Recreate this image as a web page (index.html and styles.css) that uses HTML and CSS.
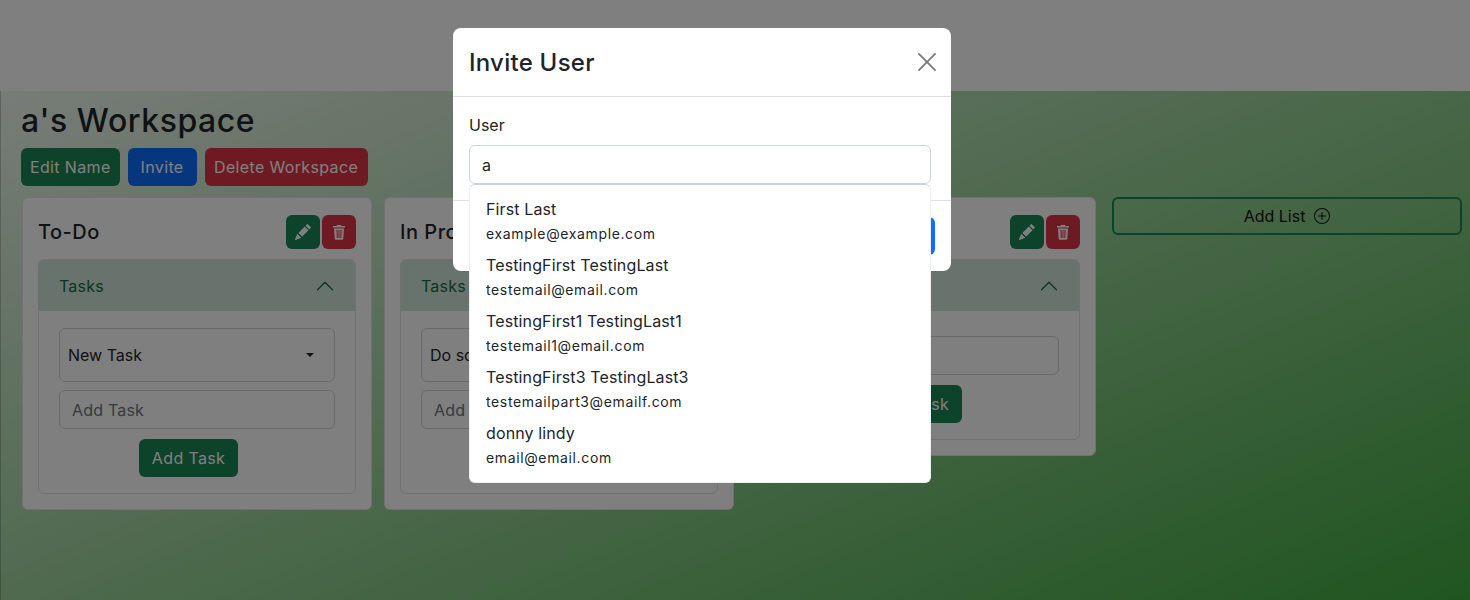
FILE: index.html
```html
<!DOCTYPE html>
<html lang="en">
<head>
    <meta charset="UTF-8">
    <meta name="viewport" content="width=device-width, initial-scale=1.0">
    <title>Workspace</title>
    <link rel="stylesheet" href="styles.css">
</head>
<body>
    <nav class="navbar"></nav>
    <main class="workspace">
        <h1 class="workspace-title">a's Workspace</h1>
        <div class="workspace-actions">
            <button class="btn btn-green">Edit Name</button>
            <button class="btn btn-blue invite-btn">Invite</button>
            <button class="btn btn-red delete-btn">Delete Workspace</button>
        </div>
        <div class="board">
            <section class="list">
                <div class="list-head">
                    <h2 class="list-title">To-Do</h2>
                    <div class="list-tools">
                        <button class="tool btn-green"><svg width="16" height="16" viewBox="0 0 16 16" fill="currentColor"><path d="M12.854.146a.5.5 0 0 0-.707 0L10.5 1.793 14.207 5.5l1.647-1.646a.5.5 0 0 0 0-.708l-3-3zm.646 6.061L9.793 2.5 3.293 9H3.5a.5.5 0 0 1 .5.5v.5h.5a.5.5 0 0 1 .5.5v.5h.5a.5.5 0 0 1 .5.5v.5h.5a.5.5 0 0 1 .5.5v.207l6.5-6.5zm-7.468 7.468A.5.5 0 0 1 6 13.5V13h-.5a.5.5 0 0 1-.5-.5V12h-.5a.5.5 0 0 1-.5-.5V11h-.5a.5.5 0 0 1-.5-.5V10h-.5a.499.499 0 0 1-.175-.032l-.179.178a.5.5 0 0 0-.11.168l-2 5a.5.5 0 0 0 .65.65l5-2a.5.5 0 0 0 .168-.11l.178-.178z"/></svg></button>
                        <button class="tool btn-red"><svg width="16" height="16" viewBox="0 0 16 16" fill="currentColor"><path d="M6 1h4l.6 1H14v1.6H2V2h3.400z"/><path fill-rule="evenodd" d="M3 4.400h10l-.7 10.400a1 1 0 0 1-1 .9H4.700a1 1 0 0 1-1-.9zM5.500 6l.3 8h1l-.2-8zm2 0v8h1V6zm2 0-.2 8h1l.3-8z"/></svg></button>
                    </div>
                </div>
                <div class="tasks">
                    <div class="tasks-head">
                        <span>Tasks</span>
                        <svg class="chevron" width="20" height="20" viewBox="0 0 16 16" fill="currentColor"><path fill-rule="evenodd" d="M1.646 11.354a.5.5 0 0 0 .708 0L8 5.707l5.646 5.647a.5.5 0 0 0 .708-.708l-6-6a.5.5 0 0 0-.708 0l-6 6a.5.5 0 0 0 0 .708z"/></svg>
                    </div>
                    <div class="tasks-body">
                        <div class="task-select"><span>New Task</span><i class="caret"></i></div>
                        <input class="task-input" type="text" placeholder="Add Task">
                        <button class="btn btn-green add-task">Add Task</button>
                    </div>
                </div>
            </section>
            <section class="list">
                <div class="list-head">
                    <h2 class="list-title">In Progress</h2>
                    <div class="list-tools">
                        <button class="tool btn-green"></button>
                        <button class="tool btn-red"></button>
                    </div>
                </div>
                <div class="tasks">
                    <div class="tasks-head">
                        <span>Tasks</span>
                    </div>
                    <div class="tasks-body">
                        <div class="task-select"><span>Do something</span><i class="caret"></i></div>
                        <input class="task-input" type="text" placeholder="Add Task">
                        <button class="btn btn-green add-task">Add Task</button>
                    </div>
                </div>
            </section>
            <section class="list">
                <div class="list-head">
                    <h2 class="list-title">Done</h2>
                    <div class="list-tools">
                        <button class="tool btn-green"><svg width="16" height="16" viewBox="0 0 16 16" fill="currentColor"><path d="M12.854.146a.5.5 0 0 0-.707 0L10.5 1.793 14.207 5.5l1.647-1.646a.5.5 0 0 0 0-.708l-3-3zm.646 6.061L9.793 2.5 3.293 9H3.5a.5.5 0 0 1 .5.5v.5h.5a.5.5 0 0 1 .5.5v.5h.5a.5.5 0 0 1 .5.5v.5h.5a.5.5 0 0 1 .5.5v.207l6.5-6.5zm-7.468 7.468A.5.5 0 0 1 6 13.5V13h-.5a.5.5 0 0 1-.5-.5V12h-.5a.5.5 0 0 1-.5-.5V11h-.5a.5.5 0 0 1-.5-.5V10h-.5a.499.499 0 0 1-.175-.032l-.179.178a.5.5 0 0 0-.11.168l-2 5a.5.5 0 0 0 .65.65l5-2a.5.5 0 0 0 .168-.11l.178-.178z"/></svg></button>
                        <button class="tool btn-red"><svg width="16" height="16" viewBox="0 0 16 16" fill="currentColor"><path d="M6 1h4l.6 1H14v1.6H2V2h3.400z"/><path fill-rule="evenodd" d="M3 4.400h10l-.7 10.400a1 1 0 0 1-1 .9H4.700a1 1 0 0 1-1-.9zM5.500 6l.3 8h1l-.2-8zm2 0v8h1V6zm2 0-.2 8h1l.3-8z"/></svg></button>
                    </div>
                </div>
                <div class="tasks">
                    <div class="tasks-head">
                        <span>Tasks</span>
                        <svg class="chevron" width="20" height="20" viewBox="0 0 16 16" fill="currentColor"><path fill-rule="evenodd" d="M1.646 11.354a.5.5 0 0 0 .708 0L8 5.707l5.646 5.647a.5.5 0 0 0 .708-.708l-6-6a.5.5 0 0 0-.708 0l-6 6a.5.5 0 0 0 0 .708z"/></svg>
                    </div>
                    <div class="tasks-body tasks-body-empty">
                        <input class="task-input" type="text" placeholder="Add Task">
                        <button class="btn btn-green add-task">Add Task</button>
                    </div>
                </div>
            </section>
            <button class="add-list">Add List <svg width="16" height="16" viewBox="0 0 16 16" fill="currentColor"><path d="M8 15A7 7 0 1 1 8 1a7 7 0 0 1 0 14zm0 1A8 8 0 1 0 8 0a8 8 0 0 0 0 16z"/><path d="M8 4a.5.5 0 0 1 .5.5v3h3a.5.5 0 0 1 0 1h-3v3a.5.5 0 0 1-1 0v-3h-3a.5.5 0 0 1 0-1h3v-3A.5.5 0 0 1 8 4z"/></svg></button>
        </div>
    </main>

    <div class="backdrop"></div>
    <div class="modal">
        <div class="modal-head">
            <h3 class="modal-title">Invite User</h3>
            <svg class="modal-close" width="18" height="18" viewBox="0 0 16 16" fill="currentColor"><path d="M.293.293a.8.8 0 0 1 1.130 0L8 6.870 14.577.293a.8.8 0 1 1 1.130 1.130L9.130 8l6.577 6.577a.8.8 0 0 1-1.130 1.130L8 9.130l-6.577 6.577a.8.8 0 0 1-1.130-1.130L6.870 8 .293 1.423a.8.8 0 0 1 0-1.130z"/></svg>
        </div>
        <div class="modal-body">
            <label class="field-label" for="user">User</label>
            <input class="field-input" id="user" type="text" value="a">
            <ul class="suggestions">
                <li><span class="person">First Last</span><span class="email">example@example.com</span></li>
                <li><span class="person">TestingFirst TestingLast</span><span class="email">testemail@email.com</span></li>
                <li><span class="person">TestingFirst1 TestingLast1</span><span class="email">testemail1@email.com</span></li>
                <li><span class="person">TestingFirst3 TestingLast3</span><span class="email">testemailpart3@emailf.com</span></li>
                <li><span class="person">donny lindy</span><span class="email">email@email.com</span></li>
            </ul>
        </div>
        <div class="modal-foot">
            <button class="btn btn-blue">Invite</button>
        </div>
    </div>
</body>
</html>
```

FILE: styles.css
```css
* {
    box-sizing: border-box;
}
html, body {
    height: 100%;
}
body {
    margin: 0;
    font-family: Inter, "Noto Sans", sans-serif;
    font-size: 16px;
    color: #212529;
    overflow: hidden;
    background: linear-gradient(to bottom right, #fff, #40aa40);
}
button, input {
    font: inherit;
}
.navbar {
    height: 91px;
    background: #fff;
}
.workspace {
    height: 509px;
    padding: 8px 8px 0 20px;
    border-left: 1px solid rgba(0, 0, 0, 0.2);
}
.workspace-title {
    margin: 0 0 5px;
    font-size: 32px;
    font-weight: 500;
    line-height: 44px;
    letter-spacing: 0.55px;
}
.workspace-actions {
    display: flex;
    gap: 8px;
    margin-bottom: 11px;
}
.btn {
    height: 38px;
    padding: 0 9px;
    border: 0;
    border-radius: 6px;
    white-space: nowrap;
    letter-spacing: 0.35px;
}
.invite-btn {
    width: 69px;
}
.delete-btn {
    width: 163px;
}
.btn-green {
    background: #198754;
    color: #fff;
}
.btn-blue {
    background: #0d6efd;
    color: #fff;
}
.btn-red {
    background: #dc3545;
    color: #fff;
}
.board {
    display: flex;
    align-items: flex-start;
    gap: 12px;
    margin-left: 1px;
}
.list {
    width: 350px;
    padding: 15px;
    background: #fff;
    border: 1px solid #e4e4e4;
    border-radius: 6px;
}
.list-head {
    display: flex;
    justify-content: space-between;
    align-items: center;
    height: 36px;
    margin: 1px 0 9px;
}
.list-title {
    margin: 0;
    font-size: 20px;
    font-weight: 500;
    letter-spacing: 0.5px;
}
.list-tools {
    display: flex;
    gap: 2px;
}
.tool {
    display: flex;
    align-items: center;
    justify-content: center;
    width: 34px;
    height: 34px;
    padding: 0;
    border: 0;
    border-radius: 6px;
}
.tasks {
    border: 1px solid #dee2e6;
    border-radius: 6px;
    overflow: hidden;
}
.tasks-head {
    display: flex;
    justify-content: space-between;
    align-items: center;
    height: 51px;
    padding: 0 20px;
    background: #d1e7dd;
    color: #146c43;
    letter-spacing: 0.2px;
}
.tasks-body {
    display: flex;
    flex-direction: column;
    padding: 17px 20px 16px;
    gap: 8px;
}
.tasks-body-empty {
    padding-top: 25px;
}
.task-select {
    display: flex;
    justify-content: space-between;
    align-items: center;
    height: 54px;
    padding: 0 20px 0 8px;
    border: 1px solid #ced4da;
    border-radius: 6px;
}
.caret {
    border-top: 4px solid #212529;
    border-left: 4px solid transparent;
    border-right: 4px solid transparent;
}
.task-input {
    height: 39px;
    padding: 0 12px;
    border: 1px solid #ced4da;
    border-radius: 6px;
    background: transparent;
    letter-spacing: 0.2px;
}
.task-input::placeholder {
    color: #6c757d;
}
.add-task {
    align-self: center;
    width: 99px;
    margin: 2px 17px 0 0;
    padding: 0;
}
.add-list {
    display: flex;
    align-items: center;
    justify-content: center;
    gap: 9px;
    width: 350px;
    height: 38px;
    margin-left: 4px;
    border: 2px solid #198754;
    border-radius: 6px;
    background: transparent;
    color: #111;
}
/* dim layer and the dialog sit over the board */
.backdrop {
    position: fixed;
    inset: 0;
    background: rgba(0, 0, 0, 0.5);
}
.modal {
    position: fixed;
    top: 28px;
    left: 453px;
    width: 498px;
    background: #fff;
    border-radius: 8px;
}
.modal-head {
    display: flex;
    justify-content: space-between;
    align-items: center;
    height: 69px;
    padding: 0 15px 0 16px;
    border-bottom: 1px solid #dee2e6;
}
.modal-title {
    margin: 0;
    font-size: 24px;
    font-weight: 500;
    letter-spacing: 0.25px;
}
.modal-close {
    color: #7a7a7a;
}
.modal-body {
    position: relative;
    height: 104px;
    padding: 16px;
    border-bottom: 1px solid #dee2e6;
}
.field-label {
    display: block;
    height: 32px;
    line-height: 24px;
}
.field-input {
    display: block;
    width: 462px;
    height: 39px;
    padding: 0 12px;
    border: 1px solid #ced4da;
    border-radius: 6px;
    color: #212529;
}
.suggestions {
    position: absolute;
    top: 87px;
    left: 16px;
    width: 462px;
    height: 299px;
    margin: 0;
    padding: 9px 16px;
    list-style: none;
    background: #fff;
    border: 1px solid #eceeef;
    border-top-color: #ced4da;
    border-radius: 6px;
}
.suggestions li {
    display: flex;
    flex-direction: column;
    height: 56px;
}
.person {
    line-height: 32px;
    height: 32px;
    margin-top: -1px;
    letter-spacing: 0.12px;
}
.email {
    font-size: 14px;
    line-height: 18px;
    letter-spacing: 0.63px;
}
.modal-foot {
    display: flex;
    justify-content: flex-end;
    height: 70px;
    padding: 16px;
}
```
